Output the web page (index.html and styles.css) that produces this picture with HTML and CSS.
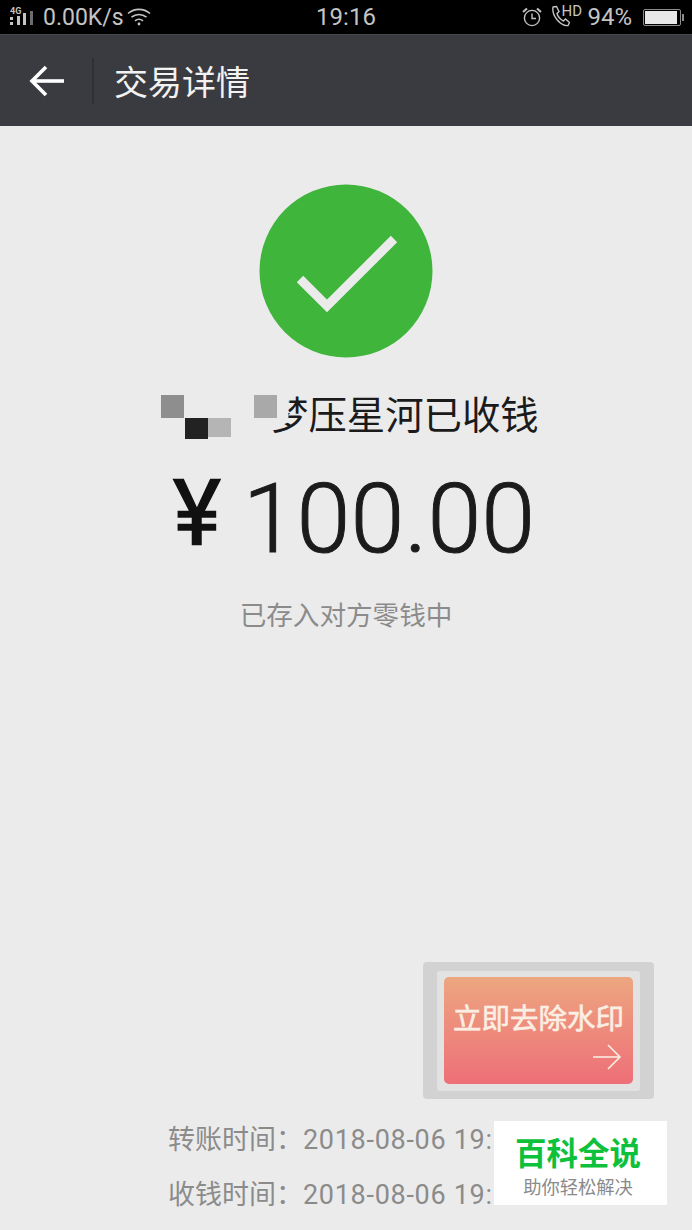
FILE: index.html
```html
<!DOCTYPE html>
<html lang="zh-CN">
<head>
    <meta charset="UTF-8">
    <meta name="viewport" content="width=device-width, initial-scale=1.0">
    <title>交易详情</title>
    <link rel="stylesheet" href="styles.css">
</head>
<body>
    <!-- Status bar -->
    <div class="status-bar">
        <div class="status-left">
            <span class="net-type">
                <span class="net-label">4G</span>
                <svg class="net-bars" width="23" height="14" viewBox="0 0 23 14">
                    <rect x="0" y="6" width="3" height="3" fill="#c4c4c4"/>
                    <rect x="0" y="11" width="3" height="3" fill="#c4c4c4"/>
                    <rect x="7" y="5" width="3" height="9" fill="#c4c4c4"/>
                    <rect x="13" y="2" width="3" height="12" fill="#c4c4c4"/>
                    <rect x="20" y="0" width="3" height="14" fill="#6d6d6d"/>
                </svg>
            </span>
            <span class="net-speed">0.00K/s</span>
            <svg class="wifi" width="24" height="20" viewBox="0 0 24 20" fill="none" stroke="#c4c4c4" stroke-width="1.6">
                <path d="M1 6.5C7.5 1 16.5 1 23 6.5"/>
                <path d="M4.5 10.2C9 6.5 15 6.5 19.5 10.2"/>
                <path d="M8 13.8C10.5 11.8 13.5 11.8 16 13.8"/>
                <circle cx="12" cy="17" r="1.4" fill="#c4c4c4" stroke="none"/>
            </svg>
        </div>
        <div class="status-time">19:16</div>
        <div class="status-right">
            <svg width="20" height="20" viewBox="0 0 20 20" fill="none" stroke="#c4c4c4" stroke-width="1.4">
                <circle cx="10" cy="11" r="7.6"/>
                <path d="M10 6.5V11.5H14"/>
                <path d="M1 5L5 1.5M19 5L15 1.5" stroke-width="2"/>
            </svg>
            <span class="call-icon">
                <svg width="20" height="22" viewBox="0 0 20 22" fill="none" stroke="#c4c4c4" stroke-width="1.4">
                    <path d="M3 2L6.5 1.5L9 6.5L7 8.5C7.5 11 10.5 15 13.5 16L15.5 14L19.5 17.5L18 20.5C11 21.5 1.5 11 3 2Z"/>
                </svg>
                <span class="call-label">HD</span>
            </span>
            <span class="battery-text">94%</span>
            <span class="battery"><span class="battery-level"></span></span>
        </div>
    </div>

    <!-- Header -->
    <header class="title-bar">
        <svg class="back" width="36" height="34" viewBox="0 0 36 34" fill="none" stroke="#fff" stroke-width="3.6">
            <path d="M35 17H4"/>
            <path d="M17 3L3 17L17 31"/>
        </svg>
        <span class="divider"></span>
        <h1 class="title">交易详情</h1>
    </header>

    <main class="content">
        <svg class="success" width="174" height="174" viewBox="0 0 174 174">
            <circle cx="87" cy="87" r="86.5" fill="#3fb53c"/>
            <path d="M41 95L68 122L135 55" fill="none" stroke="#ecebec" stroke-width="9"/>
        </svg>

        <div class="payee">
            <span class="mosaic">
                <i class="tile tile-a"></i>
                <i class="tile tile-b"></i>
                <i class="tile tile-c"></i>
                <i class="tile tile-d"></i>
            </span>
            <span class="payee-clip">梦</span>压星河已收钱
        </div>

        <div class="amount">
            <span class="currency">¥</span><span class="sum">100.00</span>
        </div>

        <div class="note">已存入对方零钱中</div>

        <!-- Watermark promo -->
        <div class="promo">
            <div class="promo-inner">
                <div class="promo-btn">
                    <span class="promo-text">立即去除水印</span>
                    <svg class="promo-arrow" width="30" height="26" viewBox="0 0 30 26" fill="none" stroke="#fbeee3" stroke-width="1.6">
                        <path d="M1 13H28"/>
                        <path d="M16 1L28 13L16 25"/>
                    </svg>
                </div>
            </div>
        </div>

        <div class="times">
            <div class="time-row">转账时间：<span class="time-value">2018-08-06 19:</span></div>
            <div class="time-row">收钱时间：<span class="time-value">2018-08-06 19:</span></div>
        </div>
    </main>

    <div class="watermark">
        <div class="watermark-name">百科全说</div>
        <div class="watermark-sub">助你轻松解决</div>
    </div>
</body>
</html>
```

FILE: styles.css
```css
html, body {
    margin: 0;
    padding: 0;
}

body {
    position: relative;
    width: 692px;
    height: 1230px;
    overflow: hidden;
    background-color: #ecebec;
    font-family: Roboto, "Noto Sans CJK SC", sans-serif;
    color: #1c1b1c;
}

/* Status bar */
.status-bar {
    display: grid;
    grid-template-columns: 1fr auto 1fr;
    align-items: center;
    height: 34px;
    background-color: #000;
    color: #c4c4c4;
    font-size: 24px;
}

.status-left {
    display: flex;
    align-items: center;
    padding-left: 9px;
}

.net-type {
    position: relative;
    display: block;
    width: 26px;
    height: 20px;
}

.net-label {
    position: absolute;
    left: 1px;
    top: -1px;
    font-size: 9px;
    line-height: 10px;
    font-weight: 700;
}

.net-bars {
    position: absolute;
    left: 1px;
    bottom: 2px;
}

.net-speed {
    margin-left: 8px;
    font-size: 23px;
}

.wifi {
    margin-left: 3px;
}

.status-time {
    text-align: center;
}

.status-right {
    display: flex;
    align-items: center;
    justify-content: flex-end;
    padding-right: 11px;
}

.call-icon {
    position: relative;
    display: block;
    width: 29px;
    height: 24px;
    margin-left: 8px;
}

.call-label {
    position: absolute;
    left: 11px;
    top: -2px;
    font-size: 15px;
    line-height: 16px;
}

.battery-text {
    margin-left: 8px;
}

.battery {
    display: block;
    position: relative;
    box-sizing: border-box;
    width: 38px;
    height: 17px;
    margin-left: 11px;
    border: 1px solid #8c8c8c;
    border-radius: 2px;
    padding: 1px;
}

.battery::after {
    content: "";
    position: absolute;
    right: -4px;
    top: 4px;
    width: 2px;
    height: 7px;
    background-color: #8c8c8c;
}

.battery-level {
    display: block;
    width: 94%;
    height: 100%;
    background-color: #e8e8e8;
}

/* Header */
.title-bar {
    display: flex;
    align-items: center;
    box-sizing: border-box;
    height: 92px;
    padding-left: 29px;
    background-color: #3a3b40;
    border-top: 1px solid #46474b;
}

.back {
    flex: none;
}

.divider {
    width: 2px;
    height: 46px;
    margin-left: 27px;
    background-color: #2f3034;
}

.title {
    margin: 0 0 0 20px;
    font-size: 34px;
    font-weight: 400;
    color: #f2f2f2;
}

/* Main content */
.content {
    display: flex;
    flex-direction: column;
    align-items: center;
    padding-top: 58px;
}

.payee {
    position: relative;
    width: 384px;
    margin-top: 32px;
    padding-left: 116px;
    box-sizing: border-box;
    font-size: 38.4px;
    line-height: 52px;
    white-space: nowrap;
}

.payee-clip {
    display: inline-block;
    clip-path: polygon(48% 0, 100% 0, 100% 100%, 0 100%, 0 78%, 48% 62%);
}

.mosaic {
    position: absolute;
    left: 0;
    top: 0;
}

.tile {
    position: absolute;
    display: block;
    width: 23px;
    height: 23px;
}

.tile-a { left: 7px; top: 5px; background-color: #8e8e8e; }
.tile-b { left: 31px; top: 28px; height: 21px; background-color: #222; }
.tile-c { left: 54px; top: 28px; height: 19px; background-color: #b5b5b5; }
.tile-d { left: 100px; top: 5px; background-color: #a9a9a9; }

.amount {
    margin-top: 22px;
    margin-left: 16px;
    height: 110px;
    line-height: 110px;
    white-space: nowrap;
}

.currency {
    font-size: 91px;
    line-height: 1;
    font-weight: 400;
    margin-right: 22px;
    vertical-align: 8px;
    color: #111;
    -webkit-text-stroke: 1.5px #111;
}

.sum {
    font-size: 97px;
    font-weight: 300;
    -webkit-text-stroke: 1px #1c1b1c;
}

.note {
    margin-top: 24px;
    font-size: 26.6px;
    line-height: 36px;
    color: #8b8b8b;
}

/* Watermark promo */
.promo {
    align-self: flex-end;
    box-sizing: border-box;
    width: 231px;
    height: 137px;
    margin-top: 328px;
    margin-right: 38px;
    padding: 9px 14px 8px;
    background-color: #d2d2d2;
    border-radius: 4px;
}

.promo-inner {
    box-sizing: border-box;
    height: 100%;
    padding: 6px 7px 7px;
    background-color: #e2e2e2;
    border-radius: 3px;
}

.promo-btn {
    display: flex;
    flex-direction: column;
    align-items: flex-end;
    box-sizing: border-box;
    height: 100%;
    padding: 23px 8px 0 9px;
    background: linear-gradient(#eda680, #ee6f78);
    border-radius: 5px;
}

.promo-text {
    align-self: stretch;
    font-size: 28.5px;
    line-height: 40px;
    font-weight: 400;
    -webkit-text-stroke: 0.6px #fbeee3;
    color: #fbeee3;
    white-space: nowrap;
}

.promo-arrow {
    margin-top: 4px;
    margin-right: 3px;
}

.times {
    align-self: flex-start;
    margin-top: 14px;
    padding-left: 168px;
    font-size: 27px;
    line-height: 55px;
    color: #8b8b8b;
    white-space: nowrap;
}

.time-value {
    letter-spacing: 0.7px;
}

/* Site mark in the corner */
.watermark {
    position: absolute;
    left: 494px;
    top: 1121px;
    width: 173px;
    height: 84px;
    padding: 15px 5px 0 0;
    box-sizing: border-box;
    background-color: #fff;
    text-align: center;
}

.watermark-name {
    font-size: 31.5px;
    line-height: 38px;
    font-weight: 700;
    color: #0dc13c;
}

.watermark-sub {
    margin-top: 2px;
    font-size: 18.3px;
    line-height: 24px;
    color: #8a8a8a;
}
```
